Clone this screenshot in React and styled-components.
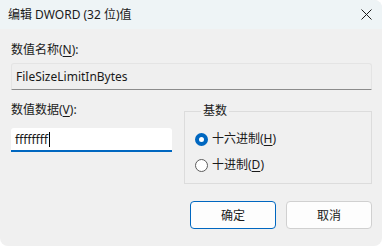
import React from 'react';
import styled, { createGlobalStyle } from 'styled-components';

const Global = createGlobalStyle`
  html, body {
    margin: 0;
    padding: 0;
    background: #ffffff;
  }
  body {
    font-family: "Segoe UI", "Noto Sans", "Noto Sans CJK SC", sans-serif;
    font-size: 12px;
    color: #1a1a1a;
  }
`;

function App() {
  return (
    <>
      <Global />
      <Dialog>
        <TitleBar>
          <Title>编辑 DWORD (32 位)值</Title>
          <Close>
            <svg width="11" height="11" viewBox="0 0 11 11">
              <path d="M0.5 0.5 L10.5 10.5 M10.5 0.5 L0.5 10.5" stroke="#1b1b1b" strokeWidth="1" />
            </svg>
          </Close>
        </TitleBar>
        <Body>
          <Label>数值名称(<u>N</u>):</Label>
          <NameField>FileSizeLimitInBytes</NameField>
          <Row>
            <DataColumn>
              <Label>数值数据(<u>V</u>):</Label>
              <DataField>
                ffffffff<Caret />
              </DataField>
            </DataColumn>
            <Group>
              <Legend>基数</Legend>
              <RadioRow>
                <Radio checked />
                <span>十六进制(<u>H</u>)</span>
              </RadioRow>
              <RadioRow>
                <Radio />
                <span>十进制(<u>D</u>)</span>
              </RadioRow>
            </Group>
          </Row>
          <Buttons>
            <Button primary>确定</Button>
            <Button>取消</Button>
          </Buttons>
        </Body>
      </Dialog>
    </>
  );
}

const Dialog = styled.div`
  width: 382px;
  height: 246px;
  background: #f0f0f0;
  border-radius: 0 8px 8px 8px;
  overflow: hidden;
  display: flex;
  flex-direction: column;
`;

const TitleBar = styled.div`
  height: 29px;
  flex-shrink: 0;
  display: flex;
  align-items: center;
  justify-content: space-between;
  padding: 0 8px 0 8px;
  background: #eef4f6;
`;

const Title = styled.div`
  font-size: 12px;
  line-height: 16px;
  color: #1a1a1a;
`;

const Close = styled.div`
  width: 12px;
  height: 12px;
  display: flex;
  align-items: center;
  justify-content: center;
  margin-right: 2px;
`;

const Body = styled.div`
  padding: 13px 10px 0 11px;
  display: flex;
  flex-direction: column;
`;

const Label = styled.div`
  line-height: 16px;
  height: 16px;
  u {
    text-decoration-thickness: 1px;
    text-underline-offset: 2px;
  }
`;

const NameField = styled.div`
  margin-top: 5px;
  height: 27px;
  box-sizing: border-box;
  padding: 0 4px;
  display: flex;
  align-items: center;
  background: #efefef;
  border: 1px solid #e4e4e4;
  border-bottom: 1px solid #8b8b8b;
  border-radius: 3px 3px 0 0;
  color: #1a1a1a;
`;

const Row = styled.div`
  display: flex;
  gap: 12px;
  margin-top: 12px;
`;

const DataColumn = styled.div`
  width: 161px;
  display: flex;
  flex-direction: column;
`;

const DataField = styled.div`
  margin-top: 10px;
  height: 24px;
  box-sizing: border-box;
  padding: 0 4px;
  display: flex;
  align-items: center;
  background: #ffffff;
  border-bottom: 2px solid #0067c0;
  border-radius: 3px 3px 0 0;
  color: #1a1a1a;
`;

const Caret = styled.span`
  display: inline-block;
  width: 1px;
  height: 15px;
  background: #000;
  margin-left: 1px;
`;

const Group = styled.fieldset`
  margin: 1px 0 0;
  width: 188px;
  box-sizing: border-box;
  border: 1px solid #dcdcdc;
  padding: 10px 0 8px 10px;
  display: flex;
  flex-direction: column;
  gap: 6px;
`;

const Legend = styled.legend`
  margin-left: 6px;
  padding: 0 2px;
  line-height: 16px;
`;

const RadioRow = styled.div`
  display: flex;
  align-items: center;
  height: 20px;
  gap: 4px;
  line-height: 16px;
  u {
    text-underline-offset: 2px;
  }
`;

const Radio = styled.span`
  width: 13px;
  height: 13px;
  box-sizing: border-box;
  border-radius: 50%;
  flex-shrink: 0;
  border: ${p => (p.checked ? '4px solid #0067c0' : '1px solid #5c5c5c')};
  background: #ffffff;
`;

const Buttons = styled.div`
  display: flex;
  justify-content: flex-end;
  gap: 10px;
  margin-top: 17px;
`;

const Button = styled.div`
  width: 86px;
  height: 28px;
  box-sizing: border-box;
  display: flex;
  align-items: center;
  justify-content: center;
  background: #fdfdfd;
  border: 1px solid ${p => (p.primary ? '#0067c0' : '#d0d0d0')};
  border-radius: 4px;
  color: #1a1a1a;
`;

export default App;
